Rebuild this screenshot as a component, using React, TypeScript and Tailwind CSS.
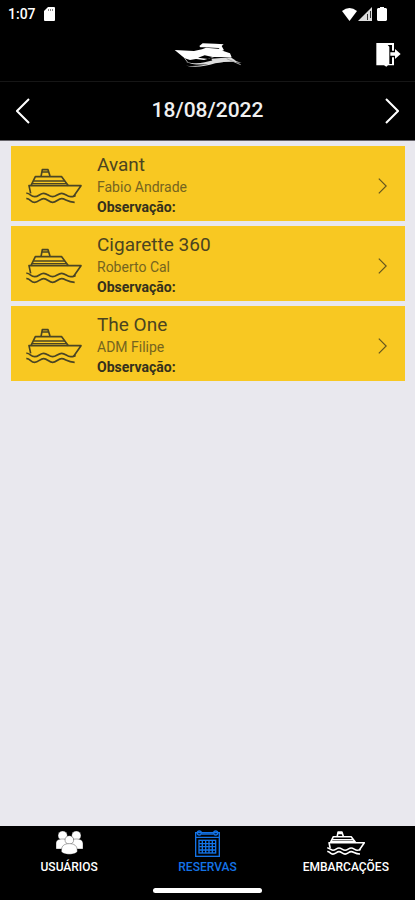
import { useState } from 'react'

type Tab = 'usuarios' | 'reservas' | 'embarcacoes'

const bookings = [
    { boat: 'Avant', owner: 'Fabio Andrade' },
    { boat: 'Cigarette 360', owner: 'Roberto Cal' },
    { boat: 'The One', owner: 'ADM Filipe' },
]

function ShipIcon({ className, strokeWidth = 5 }: { className: string; strokeWidth?: number }) {
    return (
        <svg
            viewBox="0 0 168 108"
            className={className}
            fill="none"
            stroke="currentColor"
            strokeWidth={strokeWidth}
            strokeLinejoin="round"
            aria-hidden="true"
        >
            <path d="M45 26 49 5H66L72 24M47 12H67" />
            <path d="M15 53 28 26H107L127 53" />
            <path d="M23 39H117M17 47H122" strokeWidth={strokeWidth - 1} />
            <path d="M14 76 9 53H165L142 86" />
            <path d="M1 76C11 74 14 86 26 86S42 76 53 76 69 86 80 86 96 76 107 76 123 86 134 86 142 84 149 83" />
            <path d="M1 92C11 90 14 103 26 103S42 92 53 92 69 103 80 103 96 92 107 92 123 102 146 103" />
        </svg>
    )
}

function Chevron({ className, left = false }: { className: string; left?: boolean }) {
    return (
        <svg viewBox="0 0 14 26" className={className} fill="none" stroke="currentColor" aria-hidden="true">
            <path d={left ? 'M13 1 1 13 13 25' : 'M1 1 13 13 1 25'} />
        </svg>
    )
}

function YachtLogo() {
    return (
        <svg viewBox="0 0 204 78" className="h-[26px] w-[68px]" role="img" aria-label="Marina">
            <path fill="#fff" d="M2 24 60 27 84 22 96 17 140 21 148 27 168 34 173 46 120 45 90 54 66 51 48 54 32 49Z" />
            <path fill="#fff" d="M76 12 86 4 124 5 149 7 143 12 150 25 141 26 134 18 91 16 79 16Z" />
            <path fill="#000" d="M72 47 92 40 116 45 102 51Z" />
            <path fill="#ddd" d="M36 60C70 68 90 62 118 55 145 48 168 49 203 63 170 57 150 58 124 64 92 74 60 77 36 71 66 73 90 70 104 66 76 70 52 67 36 60Z" />
            <path fill="#ddd" d="M112 50 170 46 186 56 150 60 118 62Z" />
            <path stroke="#aaa" strokeWidth="3" fill="none" d="M32 49 42 62M158 50 200 68" />
        </svg>
    )
}

function LogoutIcon() {
    return (
        <svg viewBox="0 0 75 75" className="size-[25px]" aria-hidden="true">
            <path fill="#fff" d="M1 3H54V26H48V9H35L40 14V66H48V46H54V70H36L31 74 24 70H1Z" />
            <path fill="#fff" d="M43 31H57V21L74 36 57 51V41H43Z" />
        </svg>
    )
}

function UsersIcon() {
    return (
        <svg viewBox="0 0 81 72" className="h-6 w-[27px]" fill="#fff" stroke="#000" strokeWidth="1" aria-hidden="true">
            <circle cx="20" cy="14" r="14" />
            <circle cx="61" cy="14" r="14" />
            <path d="M0 54V38C0 26 9 24 20 24S40 27 40 38V54ZM41 54V38C41 26 50 24 61 24S81 27 81 38V54Z" />
            <circle cx="40" cy="27" r="13" />
            <path d="M16 61C16 43 26 38 40 38S64 43 64 61C61 73 19 73 16 61Z" />
        </svg>
    )
}

function CalendarIcon() {
    return (
        <svg viewBox="0 0 75 81" className="h-[27px] w-[25px]" fill="none" stroke="currentColor" strokeWidth="4" aria-hidden="true">
            <rect x="2" y="8" width="71" height="71" />
            <path d="M2 22H73M20 12H55" />
            <circle cx="13" cy="9" r="6" />
            <circle cx="62" cy="9" r="6" />
            <rect x="12" y="31" width="50" height="38" />
            <path d="M22 31V69M32 31V69M42 31V69M52 31V69M12 41H62M12 50H62M12 60H62" />
        </svg>
    )
}

function StatusBar() {
    return (
        <div className="flex h-7 items-center justify-between pr-7 pl-2 text-white">
            <div className="flex items-center gap-2">
                <span className="text-sm font-medium">1:07</span>
                <svg viewBox="0 0 11 14" className="h-[14px] w-[11px]" aria-hidden="true">
                    <path fill="#fff" d="M4 0H10Q11 0 11 1V13Q11 14 10 14H1Q0 14 0 13V4Z" />
                    <path stroke="#888" d="M4.500 2V4M6.500 2V4M8.500 2V4" />
                </svg>
            </div>
            <div className="flex items-center gap-px">
                <svg viewBox="0 0 15 13" className="h-[13px] w-[15px]" aria-hidden="true">
                    <path fill="#fff" d="M0 3Q7.500-3 15 3L7.500 13Z" />
                </svg>
                <svg viewBox="0 0 14 14" className="size-[14px]" aria-hidden="true">
                    <path fill="#ddd" d="M14 0V14H0Z" />
                    <path stroke="#333" d="M9.500 7V13M12.500 4V11" />
                </svg>
                <svg viewBox="0 0 10 14" className="ml-1 h-[14px] w-[10px]" aria-hidden="true">
                    <path fill="#fff" d="M3 0H7V1H9L10 2V13L9 14H1L0 13V2L1 1H3Z" />
                </svg>
            </div>
        </div>
    )
}

export default function App() {
    const [date, setDate] = useState(new Date(2022, 7, 18))
    const [tab, setTab] = useState<Tab>('reservas')

    const moveDay = (days: number) => {
        setDate(new Date(date.getFullYear(), date.getMonth(), date.getDate() + days))
    }

    const tabClass = (name: Tab) =>
        `flex flex-col items-center ${tab === name ? 'text-[#1473e6]' : 'text-white'}`

    return (
        <div className="flex min-h-screen flex-col bg-[#e9e8ee] font-['Roboto',sans-serif]">
            {/* Header */}
            <header className="bg-black">
                <StatusBar />
                <div className="grid h-[54px] grid-cols-3 items-center border-b border-[#161616] px-[14px]">
                    <div className="col-start-2 justify-self-center">
                        <YachtLogo />
                    </div>
                    <button aria-label="Sair" className="justify-self-end">
                        <LogoutIcon />
                    </button>
                </div>
            </header>

            {/* Date picker */}
            <div className="flex h-[59px] items-center justify-between border-b border-[#66646a] bg-black px-4 text-white">
                <button aria-label="Dia anterior" onClick={() => moveDay(-1)}>
                    <Chevron left className="h-[26px] w-[14px] stroke-2" />
                </button>
                <span className="text-[21px] font-medium text-[#f0f0f0]">
                    {date.toLocaleDateString('pt-BR', { day: '2-digit', month: '2-digit', year: 'numeric' })}
                </span>
                <button aria-label="Próximo dia" onClick={() => moveDay(1)}>
                    <Chevron className="h-[26px] w-[14px] stroke-2" />
                </button>
            </div>

            {/* Bookings */}
            <main className="flex flex-1 flex-col gap-[5px] pt-[5px] pr-[10px] pl-[11px]">
                {bookings.map((booking) => (
                    <button
                        key={booking.boat}
                        className="flex h-[75px] items-center bg-[#f8c822] pr-[18px] pl-[15px] text-left"
                    >
                        <ShipIcon className="mt-1 h-9 w-14 shrink-0 text-[#4a4524]" />
                        <span className="ml-[15px] flex flex-1 flex-col pt-[2px]">
                            <span className="text-[19px] leading-6 text-[#4b4420]">{booking.boat}</span>
                            <span className="text-sm leading-5 text-[#75641f]">{booking.owner}</span>
                            <span className="text-sm leading-5 font-bold text-[#34301d]">Observação:</span>
                        </span>
                        <Chevron className="mt-1 h-4 w-[9px] stroke-2 text-[#65571e]" />
                    </button>
                ))}
            </main>

            {/* Tabs */}
            <footer className="bg-black pt-[3px]">
                <nav className="grid grid-cols-3 text-xs font-medium">
                    <button className={tabClass('usuarios')} onClick={() => setTab('usuarios')}>
                        <span className="flex h-7 items-center"><UsersIcon /></span>
                        <span className="leading-5">USUÁRIOS</span>
                    </button>
                    <button className={tabClass('reservas')} onClick={() => setTab('reservas')}>
                        <span className="flex h-7 items-center"><CalendarIcon /></span>
                        <span className="leading-5">RESERVAS</span>
                    </button>
                    <button className={tabClass('embarcacoes')} onClick={() => setTab('embarcacoes')}>
                        <span className="flex h-7 items-center"><ShipIcon className="h-[26px] w-[38px]" strokeWidth={7} /></span>
                        <span className="leading-5">EMBARCAÇÕES</span>
                    </button>
                </nav>
                <div className="mx-auto mt-[11px] mb-[7px] h-[5px] w-[109px] rounded-full bg-white" />
            </footer>
        </div>
    )
}
